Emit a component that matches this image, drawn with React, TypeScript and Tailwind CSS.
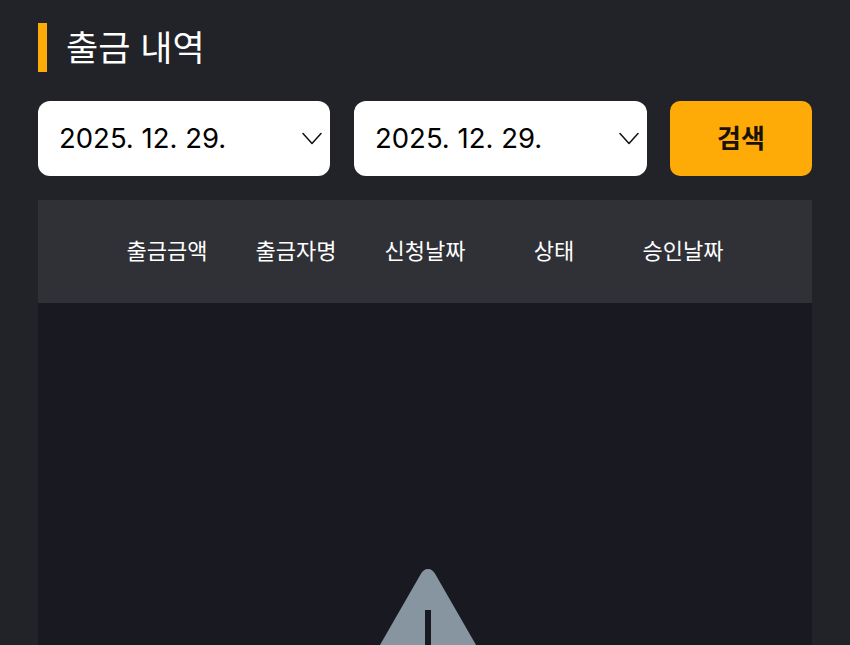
const FONT = "font-['Inter','Noto_Sans_CJK_KR',sans-serif]";

const COLUMNS = ['출금금액', '출금자명', '신청날짜', '상태', '승인날짜'];

function DateSelect({ value, width }: { value: string; width: string }) {
  return (
    <div className={`flex h-[75px] items-center justify-between rounded-[12px] bg-white pl-[21px] pr-[8px] text-black ${width}`}>
      <span className="mt-[1px] text-[27.5px] leading-none">{value}</span>
      <svg width="20" height="13" viewBox="0 0 20 13" fill="none" stroke="#111" strokeWidth="1.5" strokeLinecap="round" strokeLinejoin="round">
        <path d="M1 1.500 10 11.500 19 1.500" />
      </svg>
    </div>
  );
}

export default function App() {
  return (
    <div className={`${FONT} h-[645px] w-[850px] overflow-hidden bg-[#222328] px-[38px] pt-[23px]`}>
      <div className="flex h-[49px] items-center">
        <div className="h-full w-[9px] bg-[#ffab07]" />
        <h1 className="ml-[19px] mt-[1px] text-[35px] font-normal leading-none text-white">출금 내역</h1>
      </div>

      <div className="mt-[29px] flex justify-between">
        <div className="flex gap-[24px]">
          <DateSelect value="2025. 12. 29." width="w-[292px]" />
          <DateSelect value="2025. 12. 29." width="w-[293px]" />
        </div>
        <button className="h-[75px] w-[142px] rounded-[10px] bg-[#ffab07] text-[26px] font-semibold text-[#1a1208]">
          검색
        </button>
      </div>

      <div className="mt-[24px] flex h-[103px] items-center justify-center bg-[#303137]">
        {COLUMNS.map((col) => (
          <div key={col} className="w-[129px] text-center text-[22px] text-white">
            {col}
          </div>
        ))}
      </div>

      <div className="flex h-[400px] justify-center bg-[#181921] pt-[263px]">
        <svg width="120" height="110" viewBox="0 0 120 110" className="ml-[6px] shrink-0">
          <path
            d="M60 3c3 0 5.800 2 7.500 5.500L113.200 88c4 8-1 17-10 17H16.800c-9 0-14-9-10-17L52.500 8.500C54.200 5 57 3 60 3Z"
            fill="#8795a1"
          />
          <rect x="57" y="44" width="6" height="40" fill="#181921" />
        </svg>
      </div>
    </div>
  );
}
